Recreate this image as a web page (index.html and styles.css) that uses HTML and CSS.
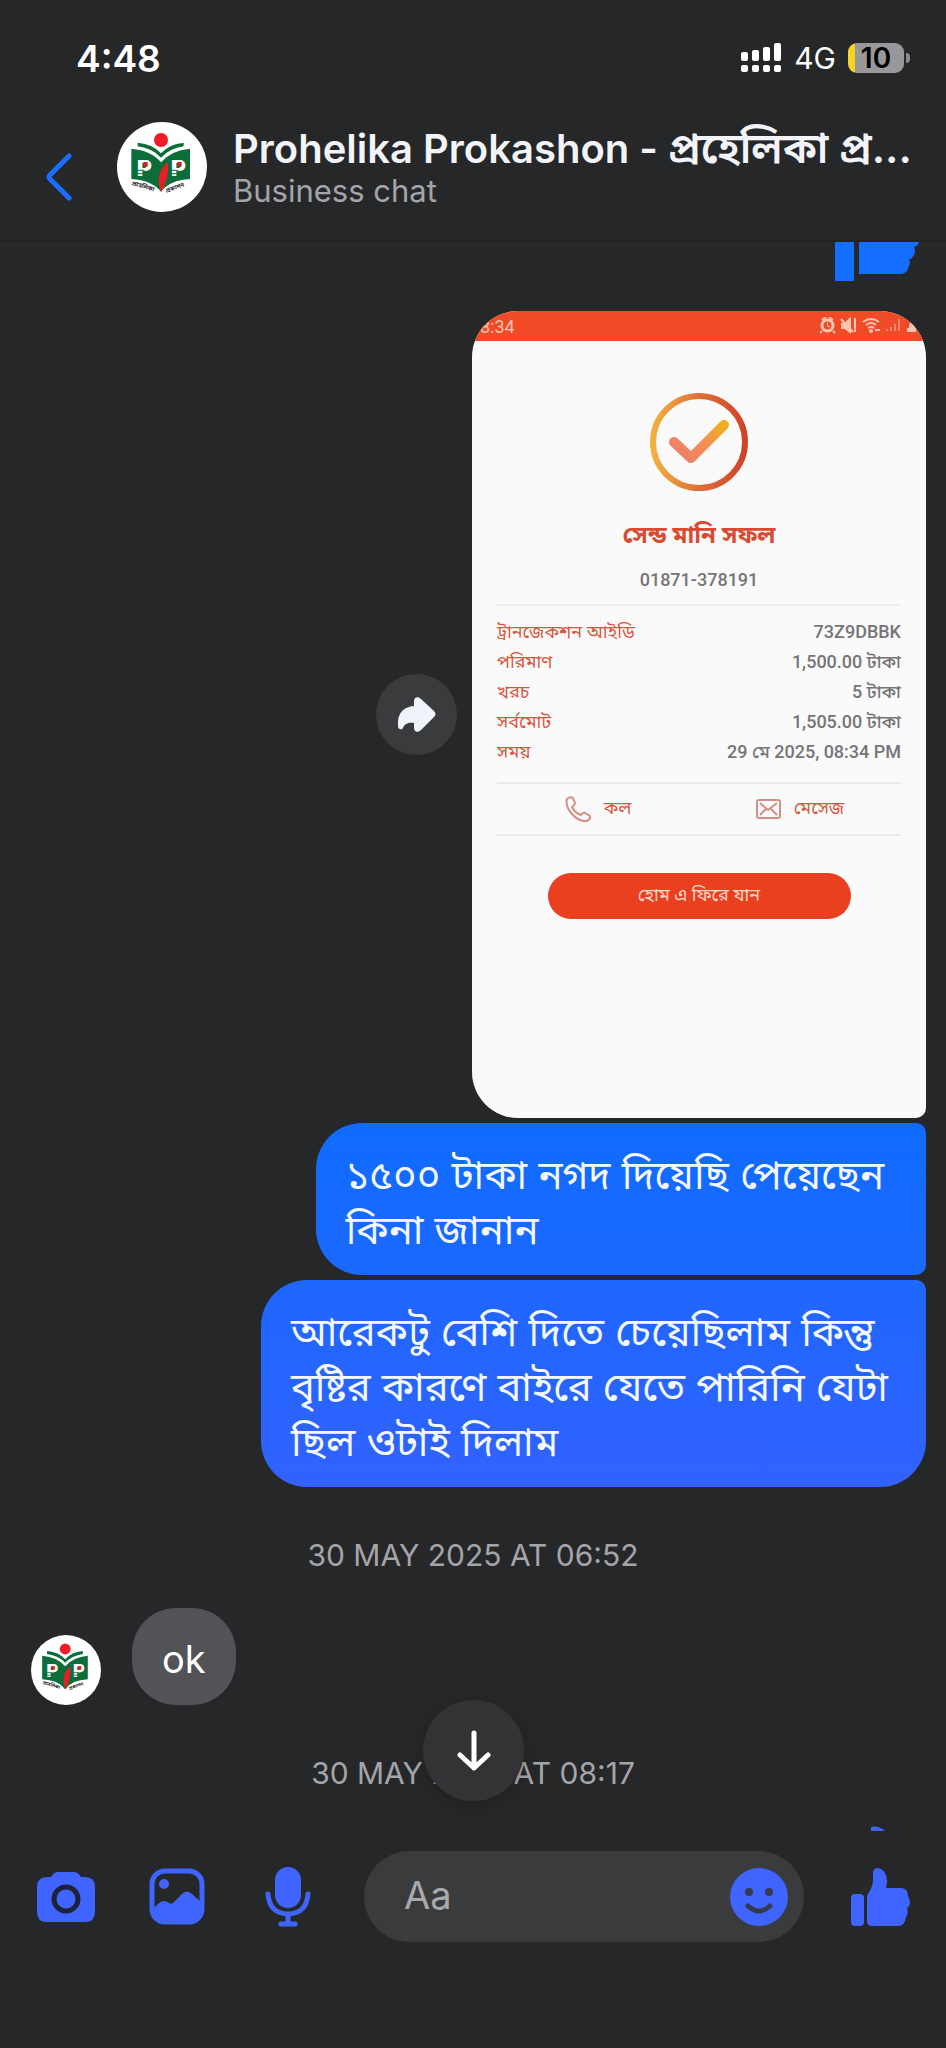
FILE: index.html
```html
<!DOCTYPE html>
<html lang="bn">
<head>
<meta charset="utf-8">
<meta name="viewport" content="width=device-width, initial-scale=1">
<title>Prohelika Prokashon</title>
<link rel="stylesheet" href="styles.css">
</head>
<body>
<header class="top">
  <div class="status">
    <span class="clock">4:48</span>
    <div class="status-icons">
      <svg width="41" height="30" viewBox="0 0 41 30" fill="#fff" aria-hidden="true">
        <rect x="0" y="9" width="7" height="9" rx="2"/><rect x="11" y="7" width="7" height="11" rx="2"/><rect x="22" y="4" width="7" height="14" rx="2"/><rect x="33" y="0" width="7" height="18" rx="2"/>
        <rect x="0" y="22" width="7" height="7" rx="2"/><rect x="11" y="22" width="7" height="7" rx="2"/><rect x="22" y="22" width="7" height="7" rx="2"/><rect x="33" y="22" width="7" height="7" rx="2"/>
      </svg>
      <span class="network">4G</span>
      <span class="battery-wrap"><span class="battery">10</span><span class="nub"></span></span>
    </div>
  </div>
  <div class="title-row">
    <button class="icon-btn back" aria-label="Back">
      <svg width="26" height="48" viewBox="0 0 26 48" fill="none" stroke="#1a6dff" stroke-width="5" stroke-linecap="round" stroke-linejoin="round"><path d="M23 3L4 22Q2 24 4 26L23 45"/></svg>
    </button>
    <svg class="avatar" viewBox="0 0 270 270" role="img" aria-label="Prohelika Prokashon">
      <g id="logo">
        <circle cx="135" cy="135" r="135" fill="#fff"/>
        <circle cx="132" cy="54" r="21" fill="#ee1c25"/>
        <path d="M62 62Q108 66 132 94Q156 66 200 62V73Q158 79 132 107Q106 79 62 73Z" fill="#0b6e3a"/>
        <path d="M43 80Q104 86 132 121Q160 86 219 80V171Q158 174 132 209Q104 174 43 171Z" fill="#0b6e3a"/>
        <text class="logo-letter" x="57" y="163">P</text>
        <text class="logo-letter" x="159" y="163">P</text>
        <path d="M153 121Q156 150 146 180Q140 199 133 210Q124 192 125 168Q128 140 153 121Z" fill="#e32026"/>
        <path d="M58 145H82M58 155H82M160 145H184M160 155H184" stroke="#0b6e3a" stroke-width="3"/>
        <rect x="79" y="120" width="13" height="13" fill="#d3212b"/>
        <rect x="181" y="120" width="13" height="13" fill="#d3212b"/>
        <text class="logo-caption" transform="translate(43 188) rotate(17)">প্রহেলিকা</text>
        <text class="logo-caption" transform="translate(148 212) rotate(-19)">প্রকাশন</text>
      </g>
    </svg>
    <div class="who">
      <h1>Prohelika Prokashon - <span class="bn">প্রহেলিকা প্র...</span></h1>
      <p>Business chat</p>
    </div>
  </div>
</header>

<main class="chat">
  <svg class="like-cut" width="86" height="39" viewBox="0 0 86 39" fill="#146eff" role="img" aria-label="Like">
    <path d="M0 0H19V39H0ZM24 0H84Q83 4 79 5Q81 9 79 13Q77 17 74 18Q76 21 74 24Q72 32 66 32H24Z"/>
  </svg>

  <div class="photo-row">
    <button class="icon-btn share" aria-label="Forward">
      <svg width="38" height="36" viewBox="0 0 38 36" fill="#f1f3fa"><path d="M16 4C16 0 20 -1 23 2L36 14Q39 17 36 20L23 33C20 36 16 35 16 31V26C9 25 6 28 5 31C4 33 0 33 0 29C-1 18 4 10 16 9Z"/></svg>
    </button>
    <article class="receipt">
      <div class="receipt-bar">
        <span>8:34</span>
        <svg width="100" height="18" viewBox="0 0 100 18" fill="none" stroke="#ffc4b0" stroke-width="2" aria-hidden="true">
          <path d="M2 3L6 0M13 3L9 0M2 14L0 16M13 14L15 16"/><circle cx="7.500" cy="8.500" r="5.500" stroke-width="3"/><path d="M7.500 5.500V9L10 10" stroke-width="1"/>
          <path d="M22 7H25L30 2V15L25 11H22ZM21 2L33 15M35 1V15" fill="#ffc4b0"/>
          <path d="M43 5Q51 -1 59 5M46 8Q51 4 56 8M48 11Q51 9 54 11"/><circle cx="51" cy="14" r="1"/><path d="M55 13H60"/>
          <path d="M67 14V12M71 14V10M75 14V7M79 14V2" opacity=".5"/>
          <path d="M87 13H96M89 9H95M92 3V13" stroke-width="4"/>
        </svg>
      </div>
      <div class="receipt-body">
        <svg class="tick" width="100" height="100" viewBox="0 0 100 100" fill="none" aria-hidden="true">
          <defs>
            <linearGradient id="ring"><stop offset="0" stop-color="#f2b040"/><stop offset=".5" stop-color="#de7039"/><stop offset="1" stop-color="#cf4328"/></linearGradient>
            <linearGradient id="mark" x1="0" y1="1" x2="1" y2="0"><stop offset="0" stop-color="#e97d6e"/><stop offset=".5" stop-color="#f58d56"/><stop offset="1" stop-color="#f0b01e"/></linearGradient>
          </defs>
          <circle cx="50" cy="50" r="46" stroke="url(#ring)" stroke-width="6"/>
          <path d="M25 50L42 66L75 33" stroke="url(#mark)" stroke-width="10" stroke-linecap="round" stroke-linejoin="round"/>
        </svg>
        <h2>সেন্ড মানি সফল</h2>
        <p class="number">01871-378191</p>
        <table>
          <tr><th scope="row">ট্রানজেকশন আইডি</th><td>73Z9DBBK</td></tr>
          <tr><th scope="row">পরিমাণ</th><td>1,500.00 টাকা</td></tr>
          <tr><th scope="row">খরচ</th><td>5 টাকা</td></tr>
          <tr><th scope="row">সর্বমোট</th><td>1,505.00 টাকা</td></tr>
          <tr><th scope="row">সময়</th><td>29 মে 2025, 08:34 PM</td></tr>
        </table>
        <div class="receipt-actions">
          <button>
            <svg width="26" height="26" viewBox="0 0 26 26" fill="none" stroke="#d68f84" stroke-width="2" stroke-linejoin="round"><path d="M2 3Q5 0 8 2L10 7Q10 9 7 11Q10 17 16 19Q18 16 20 17L25 20Q26 23 22 25Q14 26 7 18Q0 10 2 3Z"/></svg>
            কল
          </button>
          <button>
            <svg width="25" height="20" viewBox="0 0 25 20" fill="none" stroke="#d68f84" stroke-width="2" stroke-linejoin="round"><rect x="1" y="1" width="23" height="18" rx="2"/><path d="M4 4L12 11L21 4M4 16L10 10M21 16L15 10"/></svg>
            মেসেজ
          </button>
        </div>
        <button class="home">হোম এ ফিরে যান</button>
      </div>
    </article>
  </div>

  <p class="bubble sent first">১৫০০ টাকা নগদ দিয়েছি পেয়েছেন<br>কিনা জানান</p>
  <p class="bubble sent last">আরেকটু বেশি দিতে চেয়েছিলাম কিন্তু<br>বৃষ্টির কারণে বাইরে যেতে পারিনি যেটা<br>ছিল ওটাই দিলাম</p>

  <time class="stamp">30 MAY 2025 AT 06:52</time>

  <div class="incoming">
    <svg class="avatar small" viewBox="0 0 270 270" role="img" aria-label="Prohelika Prokashon"><use href="#logo"/></svg>
    <p class="bubble received">ok</p>
  </div>

  <time class="stamp">30 MAY 2025 AT 08:17</time>

  <button class="icon-btn jump" aria-label="Scroll to latest">
    <svg width="34" height="42" viewBox="0 0 34 42" fill="none" stroke="#fff" stroke-width="5" stroke-linecap="round" stroke-linejoin="round"><path d="M17 3V38M3 25L17 38L31 25"/></svg>
  </button>
  <svg class="like-peek" width="14" height="5" viewBox="0 0 14 5" fill="#4165f0" aria-hidden="true"><path d="M0 5V1Q7 -1 14 5Z"/></svg>
</main>

<footer class="composer">
  <div class="tools">
    <button class="icon-btn" aria-label="Camera">
      <svg width="60" height="52" viewBox="0 0 60 52"><path d="M11 6H15Q18 1 22 1H38Q42 1 45 6H49Q59 6 59 16V41Q59 51 49 51H11Q1 51 1 41V16Q1 6 11 6Z" fill="#4064ff"/><circle cx="30" cy="28" r="12" fill="#4064ff" stroke="#1d2238" stroke-width="5"/></svg>
    </button>
    <button class="icon-btn" aria-label="Gallery">
      <svg width="56" height="57" viewBox="0 0 56 57"><rect x="3" y="3" width="50" height="51" rx="13" fill="none" stroke="#4064ff" stroke-width="5"/><circle cx="15" cy="16" r="5" fill="#4064ff"/><path d="M4 41Q11 33 15 33Q18 33 20 35Q23 37 26 33L33 26Q38 21 43 26L52 34V43Q52 54 41 54H15Q4 54 4 43Z" fill="#4064ff"/></svg>
    </button>
    <button class="icon-btn" aria-label="Voice message">
      <svg width="46" height="60" viewBox="0 0 46 60" fill="none" stroke="#4064ff" stroke-width="5" stroke-linecap="round"><rect x="10" y="0" width="26" height="41" rx="13" fill="#4064ff" stroke="none"/><path d="M3 27C4 41 12 47 23 47S42 41 43 27M23 48V56M16 57H30"/></svg>
    </button>
  </div>
  <div class="field">
    <input type="text" placeholder="Aa" aria-label="Message">
    <button class="icon-btn" aria-label="Emoji">
      <svg width="58" height="58" viewBox="0 0 58 58"><circle cx="29" cy="29" r="29" fill="#4064ff"/><circle cx="19" cy="24" r="4" fill="#343b50"/><circle cx="39" cy="24" r="4" fill="#343b50"/><path d="M18 38Q29 48 40 38" fill="none" stroke="#343b50" stroke-width="5" stroke-linecap="round"/></svg>
    </button>
  </div>
  <button class="icon-btn" aria-label="Send like">
    <svg width="60" height="58" viewBox="0 0 60 58" fill="#4064ff"><rect x="1" y="26" width="13" height="32" rx="4"/><path d="M17 30C17 24 23 22 23 11V4Q24 0 28 0Q37 2 37 13Q37 16 36 20H52Q58 21 58 28Q60 31 60 35Q60 38 57 40Q59 45 56 49Q55 58 48 58H22Q17 58 17 53Z"/></svg>
  </button>
</footer>
</body>
</html>
```

FILE: styles.css
```css
* { box-sizing: border-box; }

body {
  margin: 0;
  min-height: 100vh;
  display: flex;
  flex-direction: column;
  background: #252728;
  color: #fff;
  font-family: Inter, "Noto Sans", "Noto Sans Bengali", sans-serif;
}

h1, h2, p { margin: 0; }

button {
  border: 0;
  padding: 0;
  background: none;
  color: inherit;
  font: inherit;
  display: flex;
  align-items: center;
  justify-content: center;
}

svg { display: block; flex: none; }
.logo-letter { font: 900 66px "DejaVu Sans", sans-serif; fill: #fff; }
.logo-caption { font: 700 18px "Noto Sans Bengali", sans-serif; fill: #2b2b2b; }

.top {
  border-bottom: 2px solid #202223;
}

.status {
  height: 116px;
  padding: 0 36px 0 76px;
  display: flex;
  align-items: center;
  justify-content: space-between;
}
.clock { font-size: 37px; font-weight: 600; }
.status-icons { display: flex; align-items: center; gap: 12px; }
.network { font-size: 30px; }
.battery-wrap { display: flex; align-items: center; gap: 2px; }
.battery {
  width: 56px;
  height: 30px;
  border-radius: 9px;
  background: linear-gradient(90deg, #f5d426 7px, #98989a 7px);
  color: #000;
  font-size: 28px;
  font-weight: 600;
  line-height: 30px;
  text-align: center;
}
.nub { width: 4px; height: 10px; border-radius: 0 4px 4px 0; background: #8a8b8c; }

.title-row {
  padding: 6px 24px 28px 46px;
  display: flex;
  align-items: center;
}
.back { margin: 20px 45px 0 0; }
.avatar { width: 90px; height: 90px; }
.who { margin-left: 26px; min-width: 0; }
.who h1 {
  font-size: 40px;
  font-weight: 600;
  line-height: 48px;
  white-space: nowrap;
  color: #f2f4fa;
}
.bn { font-size: 42px; line-height: 40px; }
.who p { font-size: 31px; line-height: 36px; color: #a4a5a8; }

.chat {
  position: relative;
  flex: 1;
  padding: 0 20px;
  display: flex;
  flex-direction: column;
  align-items: flex-end;
  overflow: hidden;
}
.like-cut { margin-right: 5px; }

.photo-row {
  width: 100%;
  margin-top: 30px;
  display: flex;
  align-items: center;
  justify-content: flex-end;
  gap: 15px;
}
.share { width: 81px; height: 81px; border-radius: 50%; background: #3a3b3d; }

.receipt {
  width: 454px;
  max-width: 60%;
  min-height: 807px;
  border-radius: 46px 46px 10px 46px;
  overflow: hidden;
  background: #fafafa;
  color: #757577;
  font-family: Roboto, "Noto Sans Bengali", sans-serif;
}
.receipt-bar {
  height: 30px;
  padding: 0 6px 0 8px;
  display: flex;
  align-items: center;
  justify-content: space-between;
  background: #f04a26;
  color: #ffc4b0;
  font-size: 18px;
}
.receipt-body {
  padding: 51px 25px 0;
  display: flex;
  flex-direction: column;
  align-items: center;
}
.receipt h2 {
  margin-top: 28px;
  font-size: 24px;
  font-weight: 700;
  line-height: 30px;
  color: #da4a30;
}
.number { margin-top: 18px; font-size: 18px; font-weight: 500; line-height: 24px; }
.receipt table {
  width: 100%;
  margin-top: 12px;
  padding: 11px 0 15px;
  border-top: 2px solid #eeeeee;
  border-spacing: 0;
}
.receipt th, .receipt td { height: 30px; padding: 0; line-height: 30px; font-size: 18px; }
.receipt th { text-align: left; font-weight: 400; color: #d8563f; }
.receipt td { text-align: right; font-weight: 500; }
.receipt-actions {
  width: 100%;
  height: 54px;
  display: grid;
  grid-template-columns: 1fr 1fr;
  border-top: 2px solid #eaeaea;
  border-bottom: 2px solid #eaeaea;
  color: #d3583f;
  font-size: 18px;
}
.receipt-actions button { gap: 13px; }
.home {
  width: 75%;
  height: 46px;
  margin-top: 37px;
  border-radius: 23px;
  background: #e94120;
  color: #ffd9c9;
  font-size: 18px;
}

.bubble { padding: 24px 30px 18px; font-size: 38px; line-height: 55px; }
.sent {
  margin-top: 5px;
  padding-right: 38px;
  color: #f4f8ff;
  font-size: 40px;
  white-space: nowrap;
}
.first {
  padding-right: 42px;
  border-radius: 46px 10px 10px 46px;
  background: linear-gradient(#0f6cff, #1c68ff);
}
.last {
  border-radius: 46px 10px 46px 46px;
  background: linear-gradient(#1e67ff, #3262ff);
}
.received { border-radius: 44px; background: #525356; color: #fff; }

.stamp {
  align-self: center;
  margin-top: 50px;
  font-size: 30px;
  line-height: 36px;
  color: #a4a5a8;
}

.incoming {
  align-self: flex-start;
  margin: 35px 0 0 11px;
  display: flex;
  align-items: flex-end;
  gap: 31px;
}
.small { width: 70px; height: 70px; }

.jump {
  position: absolute;
  bottom: 30px;
  left: calc(50% - 50px);
  width: 101px;
  height: 101px;
  border-radius: 50%;
  background: #333335;
  box-shadow: 0 4px 16px rgba(0, 0, 0, 0.2);
}
.like-peek { position: absolute; bottom: 0; right: 61px; }

.composer {
  padding: 20px 36px 106px;
  display: flex;
  align-items: center;
  gap: 46px;
}
.composer .icon-btn { min-width: 60px; }
.tools { display: flex; align-items: center; gap: 51px; }
.field {
  flex: 1;
  min-width: 0;
  height: 91px;
  padding: 0 15px 0 40px;
  display: flex;
  align-items: center;
  border-radius: 46px;
  background: #3a3b3c;
}
.field input {
  flex: 1;
  width: 0;
  min-width: 0;
  padding: 0 0 3px;
  border: 0;
  outline: 0;
  background: none;
  color: #fff;
  font: 38px Inter, "Noto Sans", sans-serif;
}
.field input::placeholder { color: #a9aaac; opacity: 1; }
```
